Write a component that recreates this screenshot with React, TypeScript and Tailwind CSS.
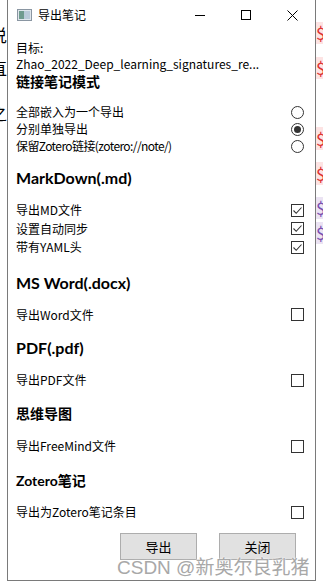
import React from "react"

const bodyFont = { fontFamily: '"Noto Sans CJK SC", "Noto Sans", sans-serif' }
const headFont = { fontFamily: 'Lato, "Noto Sans CJK SC", sans-serif' }

function Radio({ checked }: { checked?: boolean }) {
  return (
    <span className="flex h-[13px] w-[13px] items-center justify-center rounded-full border border-[#333]">
      {checked && <span className="h-[7px] w-[7px] rounded-full bg-[#333]" />}
    </span>
  )
}

function Check({ checked }: { checked?: boolean }) {
  return (
    <span className="flex h-[13px] w-[13px] items-center justify-center border border-[#333] bg-white">
      {checked && (
        <svg width="11" height="11" viewBox="0 0 11 11">
          <path d="M1.5 5.5 L4.2 8.3 L9.5 2.5" fill="none" stroke="#333" strokeWidth="1.1" />
        </svg>
      )}
    </span>
  )
}

function Row({ label, control, h = "h-[18px]" }: { label: React.ReactNode; control: React.ReactNode; h?: string }) {
  return (
    <div className={`flex ${h} items-center justify-between pr-[11px] text-[12px] text-black`}>
      <span>{label}</span>
      {control}
    </div>
  )
}

function Heading({ children, className = "" }: { children: React.ReactNode; className?: string }) {
  return (
    <div className={`flex h-[24px] items-center font-bold text-black ${className}`} style={headFont}>
      {children}
    </div>
  )
}

export default function App() {
  return (
    <div className="relative h-[588px] w-[323px] overflow-hidden bg-white" style={bodyFont}>
      {/* background fragments from the page behind */}
      <span className="absolute left-[-10px] top-[22px] text-[17px] text-black">说</span>
      <span className="absolute left-[-10px] top-[55px] text-[17px] text-black">直</span>
      <span className="absolute left-[-10px] top-[100px] text-[17px] text-black">之</span>
      <span className="absolute left-[316px] top-[22px] h-[22px] w-[10px] bg-[#fde3e3] text-[17px] leading-[22px] text-[#d33]">$C</span>
      <span className="absolute left-[316px] top-[57px] h-[22px] w-[10px] bg-[#fde3e3] text-[17px] leading-[22px] text-[#d33]">$C</span>
      <span className="absolute left-[316px] top-[127px] h-[23px] w-[10px] bg-[#fde3e3] text-[17px] leading-[23px] text-[#d33]">$C</span>
      <span className="absolute left-[316px] top-[162px] h-[23px] w-[10px] bg-[#fde3e3] text-[17px] leading-[23px] text-[#d33]">$C</span>
      <span className="absolute left-[316px] top-[197px] h-[22px] w-[10px] bg-[#ebe3f3] text-[17px] leading-[22px] text-[#7a4fb0]">$C</span>
      <span className="absolute left-[316px] top-[222px] h-[22px] w-[10px] bg-[#ebe3f3] text-[17px] leading-[22px] text-[#7a4fb0]">$C</span>

      <div className="relative z-10 ml-[7px] flex h-[581px] w-[309px] flex-col border-x border-b border-[#7a7a7a] bg-white">
        {/* title bar */}
        <div className="flex h-[30px] items-center">
          <svg className="ml-[9px]" width="15" height="12" viewBox="0 0 15 12">
            <rect x="0.5" y="0.5" width="14" height="11" fill="#dfe6ec" stroke="#8a96a2" />
            <rect x="2" y="2" width="5" height="8" fill="#6f9b8e" />
            <rect x="7" y="2" width="6" height="8" fill="#b9cad8" />
          </svg>
          <span className="ml-[6px] text-[12px] text-black">导出笔记</span>
          <div className="ml-auto flex h-full">
            <div className="flex w-[46px] items-center justify-center">
              <span className="h-px w-[10px] bg-black" />
            </div>
            <div className="flex w-[46px] items-center justify-center">
              <span className="h-[10px] w-[10px] border border-black" />
            </div>
            <div className="flex w-[46px] items-center justify-center">
              <svg width="11" height="11" viewBox="0 0 11 11">
                <path d="M0.5 0.5 L10.5 10.5 M10.5 0.5 L0.5 10.5" stroke="#000" strokeWidth="1" />
              </svg>
            </div>
          </div>
        </div>

        <div className="flex flex-col pl-[8px]">
          <div className="mt-[10px] flex h-[16px] items-center text-[12px] text-black">目标:</div>
          <div className="flex h-[16px] items-center text-[12px] text-black">Zhao_2022_Deep_learning_signatures_re...</div>
          <div className="mt-px flex h-[16px] items-center text-[14px] font-bold text-black">链接笔记模式</div>

          <div className="mt-[14.5px]">
            <Row h="h-[17px]" label="全部嵌入为一个导出" control={<Radio />} />
            <Row h="h-[17px]" label="分别单独导出" control={<Radio checked />} />
            <Row
              h="h-[17px]"
              label={<span className="tracking-[-0.6px]">保留Zotero链接(zotero://note/)</span>}
              control={<Radio />}
            />
          </div>

          <Heading className="mt-[11.5px] text-[16px]">MarkDown(.md)</Heading>
          <div className="mt-[11px]">
            <Row h="h-[18.5px]" label="导出MD文件" control={<Check checked />} />
            <Row h="h-[18.5px]" label="设置自动同步" control={<Check checked />} />
            <Row h="h-[18.5px]" label="带有YAML头" control={<Check checked />} />
          </div>

          <Heading className="mt-[14px] text-[16px]">MS Word(.docx)</Heading>
          <div className="mt-[11px]">
            <Row label="导出Word文件" control={<Check />} />
          </div>

          <Heading className="mt-[12.5px] text-[16px]">PDF(.pdf)</Heading>
          <div className="mt-[11px]">
            <Row label="导出PDF文件" control={<Check />} />
          </div>

          <Heading className="mt-[12px] text-[14px]">思维导图</Heading>
          <div className="mt-[12px]">
            <Row label="导出FreeMind文件" control={<Check />} />
          </div>

          <Heading className="mt-[13px] text-[14px]">Zotero笔记</Heading>
          <div className="mt-[11px]">
            <Row label="导出为Zotero笔记条目" control={<Check />} />
          </div>

          <div className="mt-[12px] flex justify-end gap-[22px] pr-[19px]">
            <button className="h-[27px] w-[77px] border border-[#adadad] bg-[#e1e1e1] text-[13px] text-black">导出</button>
            <button className="h-[27px] w-[77px] border border-[#adadad] bg-[#e1e1e1] text-[13px] text-black">关闭</button>
          </div>
        </div>
      </div>

      {/* watermark */}
      <span
        className="absolute left-[117px] top-[556px] z-20 text-[19px] leading-[24px] text-[#a8a8a8]"
        style={{ fontFamily: '"Liberation Sans", "Noto Sans CJK SC", sans-serif', textShadow: "0 0 2px #fff, 0 0 1px #fff" }}
      >
        CSDN @新奥尔良乳猪
      </span>
    </div>
  )
}
